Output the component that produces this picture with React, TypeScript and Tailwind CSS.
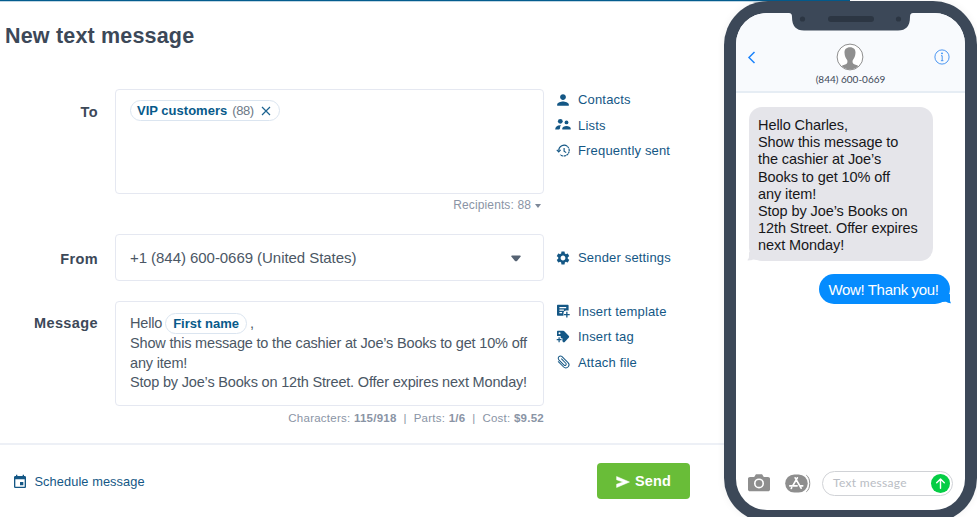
import type { ReactNode } from "react";

const sans = "font-['Liberation_Sans',Arial,sans-serif]";

function Icon({ box = "0 0 24 24", children }: { box?: string; children: ReactNode }) {
  return (
    <svg viewBox={box} className="h-4 w-4 shrink-0 overflow-visible" fill="currentColor">
      {children}
    </svg>
  );
}

const icons = {
  person: (
    <Icon box="1 1 22 22">
      <path d="M12 12c2.21 0 4-1.79 4-4s-1.79-4-4-4-4 1.79-4 4 1.79 4 4 4zm0 2c-2.67 0-8 1.34-8 4v2h16v-2c0-2.66-5.33-4-8-4z" />
    </Icon>
  ),
  group: (
    <Icon box="0 0 16 16">
      <circle cx="5.3" cy="4.3" r="2.4" />
      <circle cx="11.5" cy="5.4" r="1.9" />
      <path d="M0.200 12.600c0-2.900 2.200-4.600 5.900-4.300-.9.800-1 1.500-1 2.500 0 1.200-.7 1.800-1.600 1.800z" />
      <path d="M7.300 12.600v-1.100c0-1.600 2-2.600 4.200-2.600s4.200 1 4.200 2.600v1.100z" />
    </Icon>
  ),
  history: (
    <Icon box="0 0 16 16">
      <g fill="none" stroke="currentColor" strokeWidth="1.150">
        <path d="M3.700 7.700a5.400 5.400 0 0 1 8.700-4.300" />
        <path d="M12.400 3.400A5.400 5.400 0 1 1 5.100 11.600" strokeDasharray="2.200 0.500" />
        <path d="M1.800 6.900l1.900 2 1.900-2M9.100 4.900v3.200l2.100 1.500" />
      </g>
    </Icon>
  ),
  gear: (
    <Icon>
      <path d="M19.14 12.94c.04-.3.06-.61.06-.94 0-.32-.02-.64-.07-.94l2.03-1.58a.49.49 0 0 0 .12-.61l-1.92-3.32a.488.488 0 0 0-.59-.22l-2.39.96c-.5-.38-1.03-.7-1.62-.94l-.36-2.54a.484.484 0 0 0-.48-.41h-3.84c-.24 0-.43.17-.47.41l-.36 2.54c-.59.24-1.13.57-1.62.94l-2.39-.96c-.22-.08-.47 0-.59.22L2.74 8.87c-.12.21-.08.47.12.61l2.03 1.58c-.05.3-.09.63-.09.94s.02.64.07.94l-2.03 1.58a.49.49 0 0 0-.12.61l1.92 3.32c.12.22.37.29.59.22l2.39-.96c.5.38 1.03.7 1.62.94l.36 2.54c.05.24.24.41.48.41h3.84c.24 0 .44-.17.47-.41l.36-2.54c.59-.24 1.13-.56 1.62-.94l2.39.96c.22.08.47 0 .59-.22l1.92-3.32c.12-.22.07-.47-.12-.61l-2.01-1.58zM12 15.6c-1.98 0-3.6-1.62-3.6-3.6s1.62-3.6 3.6-3.6 3.6 1.62 3.6 3.6-1.62 3.6-3.6 3.6z" />
    </Icon>
  ),
  template: (
    <Icon box="0 0 16 16">
      <path d="M3 1.800h9.600c.6 0 1 .4 1 1v4.700H11.200c-1.600 0-2.700 1.100-2.700 2.600v2.700H3c-.6 0-1-.4-1-1v-9c0-.6.4-1 1-1zm1.400 2.300v1.200h6.800V4.100zm0 2.500v1.200h4.500V6.600zm0 2.500v1.200h2.700V9.100z" />
      <path d="M11.200 8.700h1.300v2.200h2.200v1.300h-2.200v2.200h-1.300v-2.200H9v-1.300h2.200z" />
    </Icon>
  ),
  tag: (
    <Icon box="0 0 16 16">
      <path d="M2 2.800c0-.6.4-1 1-1h5.300c.4 0 .8.2 1 .5l4.600 4.800c.4.4.4 1 0 1.400l-4.200 4.600c-.5.5-1.200.5-1.600 0l-.7-.8V9.200H5.700V7H2zm2.500.500a1 1 0 1 0 0 2 1 1 0 0 0 0-2z" />
      <path d="M3.500 8.200h1.200v1.900h1.800v1.200H4.700v1.900H3.500v-1.900H1.700v-1.200h1.800z" />
    </Icon>
  ),
  clip: (
    <Icon box="0 0 16 16">
      <path
        d="M4.500 11.100H12a3.100 3.100 0 0 0 0-6.200H3.200a2.300 2.300 0 0 0 0 4.500h8a1.300 1.300 0 0 0 0-2.500H4.800"
        transform="rotate(45 8 8)"
        fill="none"
        stroke="currentColor"
        strokeWidth="1"
        strokeLinecap="round"
      />
    </Icon>
  ),
  calendar: (
    <Icon>
      <path d="M17 12h-5v5h5v-5zM16 1v2H8V1H6v2H5c-1.110 0-1.990.9-1.990 2L3 19a2 2 0 0 0 2 2h14c1.100 0 2-.9 2-2V5c0-1.100-.9-2-2-2h-1V1h-2zm3 18H5V8h14v11z" />
    </Icon>
  ),
};

function Link({ icon, children }: { icon: ReactNode; children: ReactNode }) {
  return (
    <a className="flex items-center gap-[7px] text-[13px] leading-[25.600px] tracking-[0.170px] whitespace-nowrap text-[#145785]">
      {icon}
      <span>{children}</span>
    </a>
  );
}

function Label({ children }: { children: ReactNode }) {
  return <div className="w-[98px] shrink-0 text-right text-[14.500px] leading-5 font-bold tracking-[0.400px]">{children}</div>;
}

function Composer() {
  return (
    <main className="flex w-[724px] shrink-0 flex-col">
      <h1 className="mt-[22px] ml-[5px] text-[21.500px] leading-[26px] font-bold tracking-[0.180px]">New text message</h1>

      <section className="mt-10 flex h-[145px] items-start">
        <div className="pt-[13px]">
          <Label>To</Label>
        </div>
        <div className="ml-[17px] w-[429px]">
          <div className="h-[105px] rounded-[4px] border border-[#e5e8f1] pt-[10px] pl-[14px]">
            <span className="flex h-[21px] w-fit items-center rounded-full border border-[#dbe5f0] px-[6px] text-[13px] whitespace-nowrap">
              <b className="tracking-[0.010px] text-[#075a8a]">VIP customers</b>
              <span className="ml-[5px] tracking-[-0.400px] text-[#6d7986]">(88)</span>
              <svg viewBox="0 0 10 10" className="mr-[2px] ml-[7px] h-[10px] w-[10px]" stroke="#1c6390" strokeWidth="1.200">
                <path d="M1 1l8 8M9 1l-8 8" />
              </svg>
            </span>
          </div>
          <div className="flex items-center justify-end gap-1 pr-[3px] text-[12px] leading-[23px] tracking-[0.120px] text-[#8a94a5]">
            Recipients: 88
            <span className="h-0 w-0 border-x-[3px] border-t-4 border-x-transparent border-t-[#7d8898]" />
          </div>
        </div>
        <nav className="-mt-[2px] ml-[11px]">
          <Link icon={icons.person}>Contacts</Link>
          <Link icon={icons.group}>Lists</Link>
          <Link icon={icons.history}>Frequently sent</Link>
        </nav>
      </section>

      <section className="flex h-[67px] items-start">
        <div className="pt-[15px]">
          <Label>From</Label>
        </div>
        <div className="ml-[17px] flex h-[47px] w-[429px] items-center justify-between rounded-[4px] border border-[#e5e8f1] pt-px pr-[22px] pl-[14px] text-[15px] tracking-[-0.050px] text-[#4b5765]">
          <span>+1 (844) 600-0669 (United States)</span>
          <svg viewBox="0 0 10 7" className="h-[7px] w-[10px]" fill="#566373">
            <path d="M1 .5h8c.8 0 1 .8.500 1.300L6 5.900c-.5.600-1.500.600-2 0L.5 1.800C0 1.300.2.500 1 .5z" />
          </svg>
        </div>
        <nav className="mt-[11px] ml-[11px]">
          <Link icon={icons.gear}>Sender settings</Link>
        </nav>
      </section>

      <section className="flex h-[142px] items-start">
        <div className="pt-[12px]">
          <Label>Message</Label>
        </div>
        <div className="ml-[17px] w-[429px]">
          <div className="h-[105px] rounded-[4px] border border-[#e5e8f1] pt-[11px] pl-[14px] text-[14.500px] leading-[19.500px] tracking-[-0.180px] whitespace-nowrap text-[#4b5765]">
            <p className="flex items-center">
              <span>Hello</span>
              <span className="mr-[3px] ml-[3px] flex h-[21px] items-center rounded-full border border-[#dbe5f0] px-[7px] text-[13px] font-bold tracking-[0.010px] text-[#075a8a]">
                First name
              </span>
              <span>,</span>
            </p>
            <p>Show this message to the cashier at Joe’s Books to get 10% off</p>
            <p>any item!</p>
            <p>Stop by Joe’s Books on 12th Street. Offer expires next Monday!</p>
          </div>
          <div className="text-right text-[11.500px] leading-[25px] tracking-[0.250px] whitespace-pre text-[#8a94a5]">
            Characters: <b>115/918</b>{"  |  "}Parts: <b>1/6</b>{"  |  "}Cost: <b>$9.52</b>
          </div>
        </div>
        <nav className="-mt-[2.500px] ml-[11px]">
          <Link icon={icons.template}>Insert template</Link>
          <Link icon={icons.tag}>Insert tag</Link>
          <Link icon={icons.clip}>Attach file</Link>
        </nav>
      </section>

      <footer className="flex h-[74px] items-center justify-between border-t-2 border-[#edf0f6] pr-[34px] pl-[12px]">
        <a className="mt-[2px] flex items-center gap-[6.500px] text-[12.800px] leading-[26px] tracking-[0.080px] whitespace-nowrap text-[#145785]">
          {icons.calendar}
          <span>Schedule message</span>
        </a>
        <button className="mb-px flex h-[36px] w-[93px] items-center justify-center gap-[5px] rounded-[4px] bg-[#69bd38] pt-[2px] text-[14.500px] font-bold tracking-[0.100px] text-white">
          <svg viewBox="0 0 14 12" className="h-3 w-[14px]" fill="currentColor">
            <path d="M.6.500L13.500 6 .6 11.500V8.200L7 6 .6 3.800z" stroke="currentColor" strokeWidth="0.500" />
          </svg>
          Send
        </button>
      </footer>
    </main>
  );
}

function Phone() {
  return (
    <aside className="h-[521px] w-[253px] shrink-0 rounded-[44px] bg-[#3c4858] p-3 shadow-[0_0_8px_rgba(0,0,0,0.060)]">
      <div className="flex h-[497px] w-[229px] flex-col overflow-hidden rounded-[31px] bg-white">
        <header className="flex h-[80px] flex-col items-center border-b-2 border-[#e6edf4] bg-[#f8fafd]">
          <svg viewBox="0 0 124 18" className="h-[18px] w-[124px] shrink-0">
            <path d="M0 0h124c-2 0-3 1-3 4 0 9-4 13.500-12 13.500H15C7 17.500 3 13 3 4c0-3-1-4-3-4z" fill="#3c4858" />
            <circle cx="13.500" cy="6" r="2.600" fill="#2c3643" />
            <circle cx="109.500" cy="6" r="2.600" fill="#2c3643" />
            <rect x="39" y="3" width="46" height="6" rx="3" fill="#2c3643" />
          </svg>
          <div className="mt-[12px] flex w-full items-center justify-between pr-[15px] pl-[11px]">
            <svg viewBox="0 0 9 13" className="h-[13px] w-[9px]" fill="none" stroke="#1b83fb" strokeWidth="1.500">
              <path d="M7.500 1L2 6.500 7.500 12" />
            </svg>
            <svg viewBox="0 0 28 28" className="ml-[9px] h-[28px] w-[28px]">
              <circle cx="14" cy="14" r="12.900" fill="#fff" stroke="#8f8f8f" />
              <path
                d="M14 4.200c3.600 0 5.700 2.200 5.500 5.600-.1 3.300-1.300 5.600-2.600 7.100-.6 1-.4 2.800.2 3.500 1.100 1.100 3.700 1.200 5.300 2.600A12.700 12.700 0 0 1 14 26.600a12.700 12.700 0 0 1-8.400-3.600c1.600-1.400 4.200-1.500 5.300-2.600.6-.7.800-2.500.2-3.500-1.300-1.500-2.500-3.800-2.600-7.100-.2-3.400 1.900-5.600 5.500-5.600z"
                fill="#8f8f8f"
              />
            </svg>
            <svg viewBox="0 0 16 16" className="h-4 w-4" fill="none" stroke="#3a8cf0">
              <circle cx="8" cy="8" r="7.100" strokeWidth="0.900" />
              <path d="M7 6.700h1.200v5M6.900 11.700h2.500" strokeWidth="0.900" />
              <circle cx="8" cy="4.400" r="0.800" fill="#1b83fb" stroke="none" />
            </svg>
          </div>
          <div className="mt-px font-[Lato,sans-serif] text-[10px] leading-[14px] text-[#3c4858]">(844) 600-0669</div>
        </header>

        <div className="flex h-[377px] flex-col pt-[14px]">
          <div className="relative ml-[13px] h-[154px] w-[184px] rounded-[13px] bg-[#e5e5ea] pt-[10px] pl-[9px] text-[14.500px] leading-[17.200px] tracking-[-0.080px] whitespace-nowrap text-[#17171a]">
            Hello Charles,
            <br />
            Show this message to
            <br />
            the cashier at Joe’s
            <br />
            Books to get 10% off
            <br />
            any item!
            <br />
            Stop by Joe’s Books on
            <br />
            12th Street. Offer expires
            <br />
            next Monday!
            <svg viewBox="0 0 10 10" className="absolute -bottom-px -left-[2px] h-[10px] w-[10px]" fill="#e5e5ea">
              <path d="M2 0v4c0 2-.5 3.400-2 4.300 2 .3 4.500 0 6-.8L10 8V2z" />
            </svg>
          </div>
          <div className="relative mt-[13px] ml-[83px] flex h-[30px] w-[131px] items-center justify-center rounded-[15px] bg-[#058cfe] pt-[2px] pr-[2px] text-[15px] tracking-[-0.340px] whitespace-nowrap text-white">
            Wow! Thank you!
            <svg viewBox="0 0 10 10" className="absolute -right-px bottom-0 h-[10px] w-[10px]" fill="#058cfe">
              <path d="M9 0v3c0 2.500-.3 4.500 1 6.200-2 .1-3.500-.4-5-1.400L0 8V2z" />
            </svg>
          </div>
        </div>

        <div className="flex h-[26px] items-center pr-[11px] pl-[12px]">
          <svg viewBox="0 0 22 18" className="h-[18px] w-[22px] shrink-0" fill="#8e8e8e">
            <path d="M2 3h4.200L7.600.8c.2-.4.500-.5.900-.5h5c.4 0 .7.100.9.500L15.800 3H20c1.100 0 2 .7 2 1.800v10.600c0 1.100-.9 1.800-2 1.800H2c-1.100 0-2-.7-2-1.800V4.800C0 3.700.9 3 2 3z" />
            <circle cx="11" cy="9.400" r="4.200" fill="none" stroke="#fff" strokeWidth="1.600" />
          </svg>
          <svg viewBox="0 0 26 19" className="ml-[15px] h-[19px] w-[26px] shrink-0">
            <rect x=".2" y=".4" width="22.500" height="18.200" rx="9.100" fill="#8e8e8e" />
            <path d="M20.800 1c5.400 2.600 5.400 14.400 0 17" fill="none" stroke="#fff" strokeWidth="0.800" />
            <path d="M21.300 1.200c4.600 2.800 4.600 13.800 0 16.600" fill="none" stroke="#8e8e8e" strokeWidth="1" />
            <g stroke="#fff" strokeWidth="1.700" strokeLinecap="round" fill="none">
              <path d="M12.300 3.800L7.800 11.700M10.200 3.800l5.900 10.400M4.800 11.800h7.300M15.200 11.800h2.500M6.700 13.700l-.4.700" />
            </g>
          </svg>
          <div className="ml-[11px] flex h-[25px] w-[131px] shrink-0 items-center justify-between rounded-full border border-[#d0d2d6] pr-[2px] pl-[10px] font-[Lato,sans-serif] text-[12px] tracking-[0.300px] text-[#b9bdc4]">
            Text message
            <svg viewBox="0 0 20 20" className="h-[19px] w-[19px]">
              <circle cx="10" cy="10" r="10" fill="#05cd45" />
              <path d="M10 15V5.600M6 9.300l4-4 4 4" fill="none" stroke="#fff" strokeWidth="1.500" strokeLinecap="round" strokeLinejoin="round" />
            </svg>
          </div>
        </div>
      </div>
    </aside>
  );
}

export default function App() {
  return (
    <div className={`h-[517px] w-[977px] overflow-hidden bg-white text-[#3c4858] ${sans}`}>
      <div className="h-px w-[850px] bg-[#045c8e] shadow-[0_1px_0_rgba(4,92,142,0.250)]" />
      <div className="flex h-[516px]">
        <Composer />
        <Phone />
      </div>
    </div>
  );
}
